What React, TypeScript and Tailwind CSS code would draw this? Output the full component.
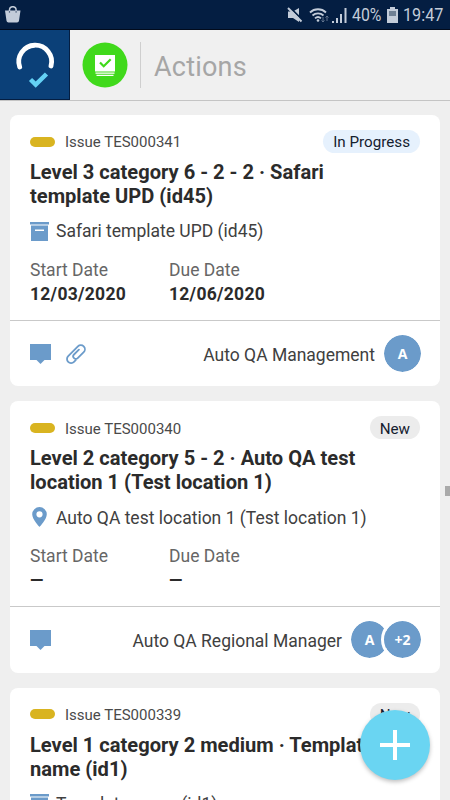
import type { ReactNode } from "react";
import clsx from "clsx";

type Action = {
  id: string;
  status: "In Progress" | "New";
  title: string[];
  source: string;
  sourceType: "template" | "location";
  start: string;
  due: string;
  assignee: string;
  avatars: string[];
  attachment?: boolean;
};

const actions: Action[] = [
  {
    id: "TES000341",
    status: "In Progress",
    title: ["Level 3 category 6 - 2 - 2 · Safari", "template UPD (id45)"],
    source: "Safari template UPD (id45)",
    sourceType: "template",
    start: "12/03/2020",
    due: "12/06/2020",
    assignee: "Auto QA Management",
    avatars: ["A"],
    attachment: true,
  },
  {
    id: "TES000340",
    status: "New",
    title: ["Level 2 category 5 - 2 · Auto QA test", "location 1 (Test location 1)"],
    source: "Auto QA test location 1 (Test location 1)",
    sourceType: "location",
    start: "—",
    due: "—",
    assignee: "Auto QA Regional Manager",
    avatars: ["A", "+2"],
  },
  {
    id: "TES000339",
    status: "New",
    title: ["Level 1 category 2 medium · Template", "name (id1)"],
    source: "Template name (id1)",
    sourceType: "template",
    start: "—",
    due: "—",
    assignee: "Auto QA Management",
    avatars: ["A"],
  },
];

function TemplateIcon() {
  return (
    <svg width="19" height="19" viewBox="0 0 19 19" fill="#6b9bca">
      <path d="M0 0h19v2.500H0z" />
      <path fillRule="evenodd" d="M1 3.500h17V19H1zM5 7.500V9h9V7.500z" />
    </svg>
  );
}

function PinIcon() {
  return (
    <svg width="19" height="20" viewBox="0 0 19 20" fill="#6b9bca">
      <path fillRule="evenodd" d="M9.500 0A7.300 7.300 0 0 0 2.200 7.300C2.200 12.500 9.500 20 9.500 20s7.300-7.500 7.300-12.700A7.300 7.300 0 0 0 9.500 0zm0 4.200a3.100 3.100 0 1 1 0 6.200 3.100 3.100 0 0 1 0-6.200z" />
    </svg>
  );
}

function CommentIcon() {
  return (
    <svg width="21" height="20" viewBox="0 0 21 20" fill="#6b9bca">
      <path d="M0 0h21v16h-6.500l-4 4-4-4H0z" />
    </svg>
  );
}

function ClipIcon() {
  return (
    <svg width="20" height="20" viewBox="0 0 20 20" fill="none" stroke="#6b9bca" strokeWidth="1.8" strokeLinecap="round">
      <path d="M9.700 16.200L8 17.900A4.100 4.100 0 0 1 2.200 12.100L11.900 2.400A4.100 4.100 0 0 1 17.700 8.200L11.700 14.200A2.600 2.600 0 0 1 8 10.500L12.900 5.700" />
    </svg>
  );
}

function StatusBar() {
  return (
    <div className="flex h-[30px] items-center border-b border-[#020b1c] bg-[#041e42] pl-[5px] pr-[6px] text-[#c3ccd9]">
      <svg width="16" height="17" viewBox="0 0 16 17" fill="#c3ccd9">
        <path d="M0 4.500h15.500L14 14.700a2 2 0 0 1-2 1.800H3.500a2 2 0 0 1-2-1.800z" />
        <path d="M4.500 5V4a3.300 3.300 0 0 1 6.600 0v1" fill="none" stroke="#c3ccd9" strokeWidth="1.500" />
        <path d="M4.500 5v1.800M11.100 5v1.800" stroke="#5a6b85" strokeWidth="1.200" />
      </svg>
      <div className="ml-auto flex items-center pt-px">
        <svg width="16" height="16" viewBox="0 0 16 16" fill="#c3ccd9">
          <path d="M1 4.500h5L12 1v14l-6-4H1z" />
          <path d="M2.500 0L16 13.500" stroke="#041e42" strokeWidth="1.800" />
          <path d="M1 1l13.500 13.500" stroke="#c3ccd9" strokeWidth="1.900" />
        </svg>
        <svg className="ml-[6px]" width="20" height="16" viewBox="0 0 20 16" fill="none" stroke="#c3ccd9" strokeWidth="1.800">
          <path d="M1 5.500a11.500 11.500 0 0 1 16 0M3.500 8.500a8 8 0 0 1 11 0M6 11.300a4.500 4.500 0 0 1 6 0" />
          <circle cx="9" cy="13.500" r="1.300" fill="#c3ccd9" stroke="none" />
          <path d="M14 10v5m-1.500-1.500L14 15l1.500-1.500M18 14V9m-1.500 1.500L18 9l1.500 1.500" stroke="#61738d" strokeWidth="1" />
        </svg>
        <svg className="ml-[3px]" width="15" height="15" viewBox="0 0 15 15" fill="#c3ccd9">
          <path d="M0 13h2v2H0zM4 10h2v5H4zM8 6h2v9H8zM12.500 0h2v15h-2z" />
        </svg>
        <span className="ml-[5px] w-[30px] origin-left scale-x-[.88] whitespace-nowrap text-[18px] leading-[30px]">40%</span>
        <svg className="ml-[5px]" width="11" height="16" viewBox="0 0 11 16">
          <path d="M3 0h5v2h3v14H0V2h3z" fill="#c3ccd9" />
          <path d="M2 4h7v5H2z" fill="#6f8094" />
        </svg>
        <span className="ml-[5px] w-[41px] origin-left scale-x-[.9] whitespace-nowrap text-[18px] leading-[30px]">19:47</span>
      </div>
    </div>
  );
}

function Header() {
  return (
    <header className="flex h-[71px] items-center border-b border-[#c4c4c4] bg-[#f0f0f0]">
      <div className="flex h-[70px] w-[70px] shrink-0 border-b border-r border-[#041e42] bg-[#0b4078]">
        <svg width="69" height="69" viewBox="0 0 69 69" fill="none" strokeLinecap="round">
          <path d="M19.700 37A16.400 16.400 0 1 1 51 36" stroke="#fff" strokeWidth="4.800" />
          <path d="M30.500 49.500l5.200 5.200L46.500 44" stroke="#64d1f4" strokeWidth="4.500" strokeLinecap="butt" />
        </svg>
      </div>
      <svg className="ml-[12px]" width="46" height="46" viewBox="0 0 46 46">
        <circle cx="23" cy="23" r="22.500" fill="#40d91b" />
        <path d="M13 13h20v16.500H13zM13.500 30.500h19v1.200h-19zM14.500 32.800h17v1.100h-17z" fill="#fff" />
        <path d="M18 20.500l3.700 3.700 7-7" fill="none" stroke="#40d91b" strokeWidth="2.200" />
      </svg>
      <div className="ml-[12px] h-[46px] w-px bg-[#cfcfcf]" />
      <h1 className="ml-[13px] mt-[4px] text-[27px] font-normal tracking-[.2px] text-[#a6a6a6]">Actions</h1>
    </header>
  );
}

function DateField({ label, children }: { label: string; children: ReactNode }) {
  return (
    <div className="w-[139px] leading-6">
      <div className="text-[17.5px] text-[#666]">{label}</div>
      <div className="text-[17.5px] font-bold tracking-[.27px] text-[#2b2b2b]">{children}</div>
    </div>
  );
}

function ActionCard({ action }: { action: Action }) {
  return (
    <article className="h-[271.400px] shrink-0 rounded-[8px] bg-white">
      <div className="h-[206px] border-b border-[#c9c9c9] px-5 pt-[15px]">
        <div className="flex h-[23px] items-center">
          <span className="h-[10px] w-[25px] rounded-full bg-[#d9b420]" />
          <span className="ml-[10px] mt-[2px] text-[15px] text-[#4a4a4a]">Issue {action.id}</span>
          <span
            className={clsx(
              "ml-auto flex h-[23px] items-center rounded-full px-[10px] pt-[2px] text-[15.200px] text-[#14202f]",
              action.status === "New" ? "bg-[#ececec]" : "bg-[#e6f1fd]",
            )}
          >
            {action.status}
          </span>
        </div>
        <h2 className="mt-[7px] whitespace-nowrap text-[20.100px] font-bold leading-6 text-[#2b2b2b]">
          {action.title.map((line) => (
            <div key={line}>{line}</div>
          ))}
        </h2>
        <div className="mt-[11px] flex h-6 items-center">
          {action.sourceType === "template" ? <TemplateIcon /> : <PinIcon />}
          <span className="ml-[7px] mt-px whitespace-nowrap text-[17.500px] text-[#404040]">{action.source}</span>
        </div>
        <div className="mt-[15px] flex">
          <DateField label="Start Date">{action.start}</DateField>
          <DateField label="Due Date">{action.due}</DateField>
        </div>
      </div>
      <footer className="flex h-[65px] items-center gap-[15px] px-5">
        <CommentIcon />
        {action.attachment && <ClipIcon />}
        <span className="ml-auto mr-[-9px] mt-[3px] whitespace-nowrap text-[17.500px] text-[#404040]">{action.assignee}</span>
        <div className="mr-[-4px] flex">
          {action.avatars.map((label, i) => (
            <span
              key={label}
              className={clsx(
                "box-content flex h-[37px] w-[37px] items-center justify-center rounded-full border-[3px] border-white bg-[#6b9bca] bg-clip-padding font-['Open_Sans'] text-[14px] font-bold text-white",
                i > 0 && "ml-[-10px]",
              )}
            >
              {label}
            </span>
          ))}
        </div>
      </footer>
    </article>
  );
}

export default function App() {
  return (
    <div className="relative flex h-[800px] w-[450px] flex-col overflow-hidden bg-[#efefef] font-[Roboto,sans-serif]">
      <StatusBar />
      <Header />
      <main className="flex flex-1 flex-col gap-[15px] overflow-hidden px-[10px] pt-[14px]">
        {actions.map((action) => (
          <ActionCard key={action.id} action={action} />
        ))}
      </main>
      {/* Scroll thumb */}
      <div className="absolute right-0 top-[486px] h-[10px] w-[5px] bg-[#aaa]" />
      <button
        aria-label="Add action"
        className="absolute left-[360px] top-[710px] flex h-[70px] w-[70px] items-center justify-center rounded-full bg-[#6ad5f2] shadow-[0_2px_4px_rgba(0,0,0,0.25)]"
      >
        <svg width="30" height="30" viewBox="0 0 30 30" fill="#fff">
          <path d="M13 0h4v13h13v4H17v13h-4V17H0v-4h13z" />
        </svg>
      </button>
    </div>
  );
}
